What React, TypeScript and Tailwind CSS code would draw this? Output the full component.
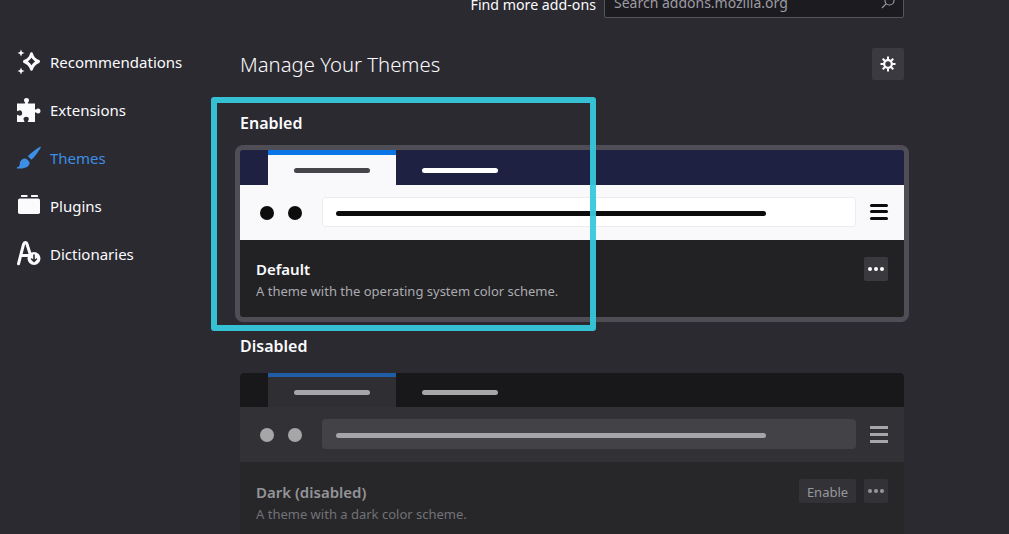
const nav = [
  { label: "Recommendations", icon: <SparkIcon />, active: false },
  { label: "Extensions", icon: <PuzzleIcon />, active: false },
  { label: "Themes", icon: <BrushIcon />, active: true },
  { label: "Plugins", icon: <PluginIcon />, active: false },
  { label: "Dictionaries", icon: <DictIcon />, active: false },
];

function SparkIcon() {
  return (
    <svg width="26" height="26" viewBox="0 0 26 26" fill="none">
      <path d="M15.500 4.800c1 4 2.700 5.900 7 7.700-4.300 1.800-6 3.700-7 7.700-1-4-2.700-5.900-7-7.700 4.300-1.800 6-3.700 7-7.700z" stroke="#fbfbfe" strokeWidth="3" strokeLinejoin="round" />
      <path d="M5 .5l1 2.500 2.500 1-2.500 1L5 7.500l-1-2.500-2.500-1L4 3z" fill="#fbfbfe" />
      <path d="M5 18.500l1 2.500 2.500 1-2.500 1-1 2.500-1-2.500-2.500-1L4 21z" fill="#fbfbfe" />
    </svg>
  );
}
function PuzzleIcon() {
  return (
    <svg width="26" height="26" viewBox="0 0 26 26" fill="#fbfbfe">
      <path d="M1 6.500h7.500c.6 0 .8-.5.500-1-.6-.8-1-1.500-1-2.300C8 1.800 9.200 1 10.500 1S13 1.800 13 3.200c0 .8-.4 1.500-1 2.300-.3.500-.1 1 .5 1H19v5.500c0 .6.500.8 1 .5.800-.6 1.500-1 2.200-1 1.400 0 2.300 1.100 2.300 2.500s-.9 2.500-2.300 2.500c-.7 0-1.400-.4-2.200-1-.5-.3-1-.1-1 .5V25h-6.500c-.6 0-.8-.5-.5-1 .5-.8.800-1.400.8-2 0-1.300-1.200-2.200-2.500-2.200S7.500 20.700 7.500 22c0 .6.300 1.200.8 2 .3.500.1 1-.5 1H1v-6.500c0-.6.500-.8 1-.5.700.5 1.300.8 2 .8 1.300 0 2.200-1.200 2.200-2.500S5.300 13.300 4 13.300c-.7 0-1.300.3-2 .8-.5.300-1 .1-1-.5z" />
    </svg>
  );
}
function BrushIcon() {
  return (
    <svg width="26" height="26" viewBox="0 0 26 26" fill="#3d8ee6">
      <path d="M24 1.800c.6-.4 1.200.2.800.8-2.200 4-5.500 8.700-9.300 12.200l-3.700-3.500C14.800 8 20 4.300 24 1.800z" />
      <path d="M7.500 13.800c1.500-.6 2.500-.5 3.700.6l1.800 1.800c.9 1.100.8 2.700-.4 4.200-1.900 2.500-6.500 3.400-11.500 3-.6-.1-.6-.6-.1-.8 2.300-.8 2.700-2 3-4-.3 0 .1-3.700 3.500-4.800z" />
    </svg>
  );
}
function PluginIcon() {
  return (
    <svg width="26" height="26" viewBox="0 0 26 26" fill="#fbfbfe">
      <rect x="5" y="2" width="6.500" height="2" rx=".6" />
      <rect x="15" y="2" width="7" height="2" rx=".6" />
      <rect x="2" y="5.500" width="22" height="15.500" rx="1.800" />
    </svg>
  );
}
function DictIcon() {
  return (
    <svg width="28" height="28" viewBox="0 0 28 28" fill="none">
      <path d="M2.500 23.800 7.500 4.500c.4-1.300 1-2 1.800-2s1.500.7 1.800 2L14.500 15M5 15.500h8" stroke="#fbfbfe" strokeWidth="3" strokeLinecap="round" strokeLinejoin="round" />
      <circle cx="18" cy="18.500" r="6.500" fill="#fbfbfe" />
      <path d="M18 15v6M15.600 19l2.400 2.400 2.400-2.400" stroke="#2b2a30" strokeWidth="1.600" strokeLinecap="round" strokeLinejoin="round" />
    </svg>
  );
}
function SearchIcon() {
  return (
    <svg width="14" height="14" viewBox="0 0 14 14" fill="none" stroke="#9a9aa0" strokeWidth="1.200">
      <circle cx="8.500" cy="5.500" r="4.500" />
      <path d="M5.300 8.700 1 13" />
    </svg>
  );
}
function GearIcon() {
  return (
    <svg width="16" height="16" viewBox="0 0 16 16" fill="none" stroke="#ffffff">
      <circle cx="8" cy="8" r="3.800" strokeWidth="2.200" />
      <path d="M8 .5v3M8 12.500v3M.5 8h3M12.500 8h3M2.700 2.700l2.100 2.100M11.200 11.200l2.100 2.100M2.700 13.300l2.100-2.100M11.200 4.800l2.100-2.100" strokeWidth="2" />
    </svg>
  );
}
function Dots({ className }: { className: string }) {
  return (
    <div className="flex gap-[2px]">
      <span className={`w-[4px] h-[4px] rounded-full ${className}`} />
      <span className={`w-[4px] h-[4px] rounded-full ${className}`} />
      <span className={`w-[4px] h-[4px] rounded-full ${className}`} />
    </div>
  );
}

function EnabledPreview() {
  return (
    <>
      <div className="h-[35px] bg-[#1f2142] flex pl-[28px] rounded-t-[3px]">
        <div className="w-[128px] bg-[#f9f9fb] border-t-[5px] border-[#0a76e6] flex items-center justify-center">
          <div className="w-[76px] h-[5px] rounded-full bg-[#45454a]" />
        </div>
        <div className="w-[128px] flex items-center justify-center pt-[5px]">
          <div className="w-[76px] h-[5px] rounded-full bg-white" />
        </div>
      </div>
      <div className="h-[55px] bg-[#f9f9fb] flex items-center pl-[20px] pr-[16px]">
        <div className="w-[14px] h-[14px] rounded-full bg-[#0c0c0d]" />
        <div className="w-[14px] h-[14px] rounded-full bg-[#0c0c0d] ml-[14px]" />
        <div className="ml-[20px] w-[534px] h-[30px] self-start mt-[12px] pt-[2px] bg-white border border-[#ececee] rounded-[3px] flex items-center pl-[13px]">
          <div className="w-[430px] h-[5px] rounded-full bg-[#0c0c0d]" />
        </div>
        <div className="ml-[14px] w-[18px] mb-[2px] flex flex-col gap-[3.500px]">
          <div className="h-[3px] rounded-full bg-[#0c0c0d]" />
          <div className="h-[3px] rounded-full bg-[#0c0c0d]" />
          <div className="h-[3px] rounded-full bg-[#0c0c0d]" />
        </div>
      </div>
    </>
  );
}

function DisabledPreview() {
  return (
    <>
      <div className="h-[34px] bg-[#18181a] flex pl-[28px] rounded-t-[4px]">
        <div className="w-[128px] bg-[#2f2f33] border-t-[4px] border-[#1f5ea6] flex items-center justify-center">
          <div className="w-[76px] h-[5px] rounded-full bg-[#a6a6a8]" />
        </div>
        <div className="w-[128px] flex items-center justify-center pt-[4px]">
          <div className="w-[76px] h-[5px] rounded-full bg-[#a6a6a8]" />
        </div>
      </div>
      <div className="h-[55px] bg-[#323236] flex items-center pl-[20px] pr-[16px]">
        <div className="w-[14px] h-[14px] rounded-full bg-[#a6a6a8]" />
        <div className="w-[14px] h-[14px] rounded-full bg-[#a6a6a8] ml-[14px]" />
        <div className="ml-[20px] w-[534px] h-[30px] self-start mt-[12px] pt-[2px] bg-[#434347] rounded-[4px] flex items-center pl-[14px]">
          <div className="w-[430px] h-[5px] rounded-full bg-[#a6a6a8]" />
        </div>
        <div className="ml-[14px] w-[18px] flex flex-col gap-[4px]">
          <div className="h-[3px] bg-[#a6a6a8]" />
          <div className="h-[3px] bg-[#a6a6a8]" />
          <div className="h-[3px] bg-[#a6a6a8]" />
        </div>
      </div>
    </>
  );
}

export default function App() {
  return (
    <div className="relative w-[1009px] h-[534px] overflow-hidden bg-[#2b2a30] text-[#fbfbfe] font-['Noto_Sans',sans-serif]">
      <header className="h-[18px] flex justify-end items-end pr-[105px] overflow-hidden">
        <span className="text-[14.200px] leading-[20px] mb-[3px] mr-[8px]">Find more add-ons</span>
        <div className="w-[300px] h-[32px] shrink-0 bg-[#1c1b20] border border-[#55555c] rounded-[2px] flex items-center justify-between pl-[9px] pr-[8px]">
          <span className="text-[14px] text-[#9c9ca2]">Search addons.mozilla.org</span>
          <SearchIcon />
        </div>
      </header>

      <div className="flex">
        <nav className="w-[240px] shrink-0 pt-[20px] pl-[16px]">
          {nav.map((n) => (
            <div key={n.label} className="h-[48px] flex items-center">
              <div className="w-[34px] h-[28px] shrink-0 flex items-center">{n.icon}</div>
              <span className={`text-[15px] ${n.active ? "text-[#3d8ee6]" : "text-[#fbfbfe]"}`}>{n.label}</span>
            </div>
          ))}
        </nav>

        <main className="w-[664px] shrink-0">
          <div className="h-[32px] mt-[30px] flex items-center justify-between">
            <h1 className="text-[20.300px] font-light pt-[1px]">Manage Your Themes</h1>
            <button className="w-[32px] h-[32px] rounded-[2px] bg-[#3b3a40] flex items-center justify-center">
              <GearIcon />
            </button>
          </div>

          <h2 className="text-[16px] font-semibold leading-[22px] mt-[32px]">Enabled</h2>
          <section className="mt-[16px] h-[167px] rounded-[3px] bg-[#222225] outline-[5px] outline-solid outline-[#4f4e56] overflow-hidden">
            <EnabledPreview />
            <div className="pt-[17px] pl-[16px] pr-[16px] flex justify-between">
              <div>
                <div className="text-[15px] font-semibold leading-[24px]">Default</div>
                <div className="text-[13px] leading-[20px] text-[#ababb0]">A theme with the operating system color scheme.</div>
              </div>
              <button className="w-[24px] h-[24px] rounded-[2px] bg-[#3a3a3e] flex items-center justify-center">
                <Dots className="bg-white" />
              </button>
            </div>
          </section>

          <h2 className="text-[16px] font-semibold leading-[22px] mt-[18px]">Disabled</h2>
          <section className="mt-[16px] h-[200px] rounded-[4px] bg-[#27272a] overflow-hidden">
            <DisabledPreview />
            <div className="pt-[18px] pl-[16px] pr-[16px] flex justify-between">
              <div>
                <div className="text-[15px] font-semibold leading-[24px] text-[#949497]">Dark (disabled)</div>
                <div className="text-[13px] leading-[20px] text-[#727277]">A theme with a dark color scheme.</div>
              </div>
              <div className="flex gap-[8px] mt-[-1px]">
                <button className="w-[57px] h-[24px] rounded-[2px] bg-[#333337] text-[13px] leading-[24px] pt-[1px] text-[#98989c]">Enable</button>
                <button className="w-[24px] h-[24px] rounded-[2px] bg-[#333337] flex items-center justify-center">
                  <Dots className="bg-[#98989c]" />
                </button>
              </div>
            </div>
          </section>
        </main>
      </div>

      <div className="absolute left-[211px] top-[97px] w-[385px] h-[234px] border-[6px] border-[#36c8dd]/95 rounded-[3px] pointer-events-none" />
    </div>
  );
}
